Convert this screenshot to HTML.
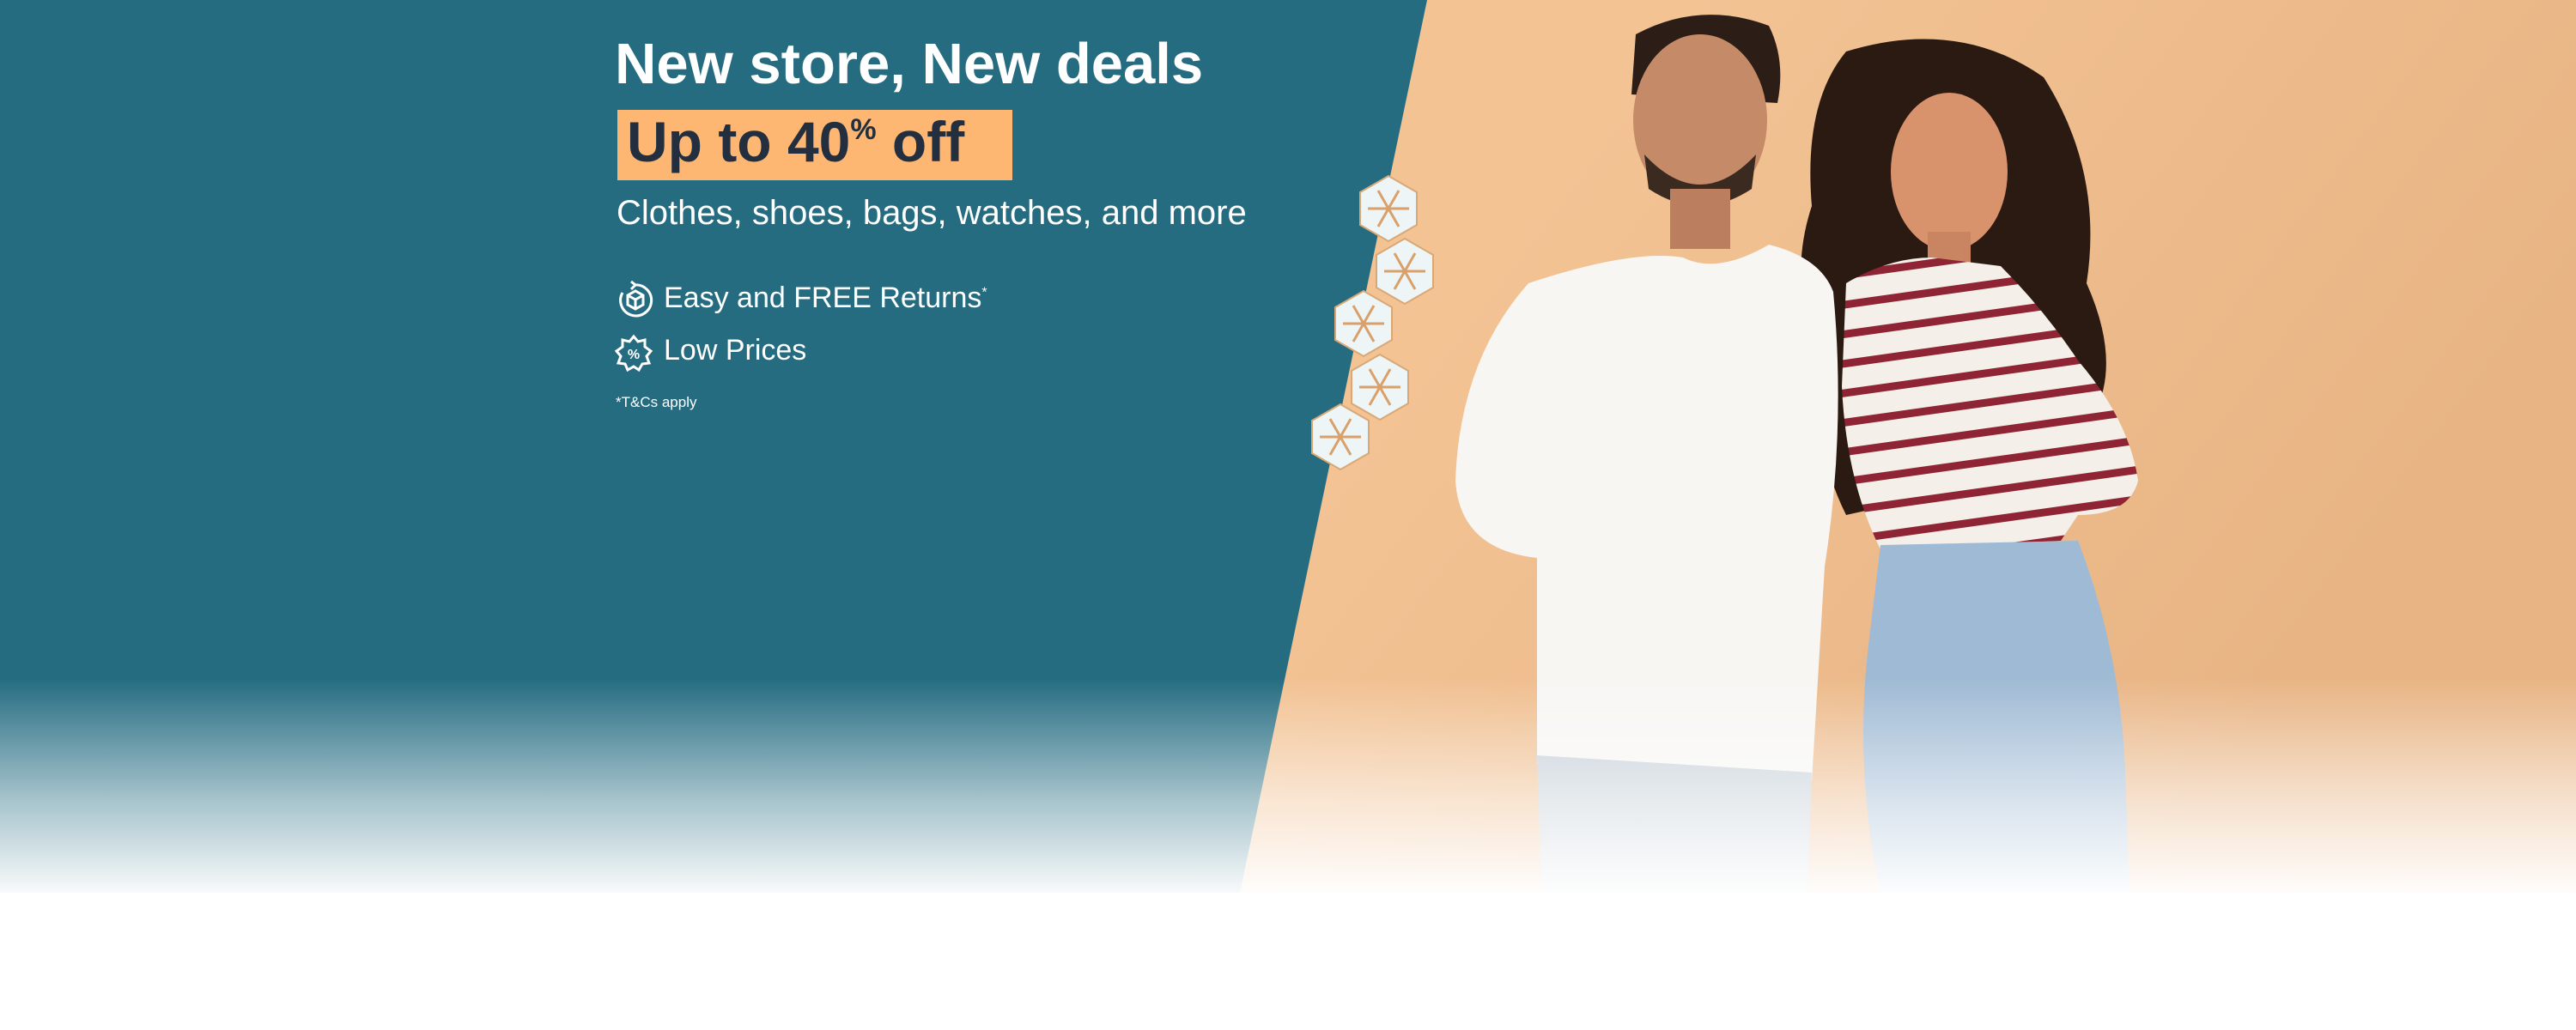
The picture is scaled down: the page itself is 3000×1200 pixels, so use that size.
<!DOCTYPE html>
<html><head><meta charset="utf-8"><style>
html,body{margin:0;padding:0;width:3000px;height:1200px;overflow:hidden;background:#fff}
.wrap{position:relative;width:3000px;height:1200px;font-family:"Liberation Sans",sans-serif}
svg.bg{position:absolute;left:0;top:0}
.t{position:absolute;color:#fff;white-space:nowrap}
</style></head><body><div class="wrap">
<svg class="bg" width="3000" height="1200" viewBox="0 0 3000 1200">
<defs>
<linearGradient id="pe" x1="0" y1="0" x2="1" y2="0.3"><stop offset="0" stop-color="#f1c395"/><stop offset="0.6" stop-color="#f3c394"/><stop offset="1" stop-color="#e8b484"/></linearGradient>
<linearGradient id="fade" x1="0" y1="0" x2="0" y2="1"><stop offset="0" stop-color="#fff" stop-opacity="0"/><stop offset="0.55" stop-color="#fff" stop-opacity="0.6"/><stop offset="1" stop-color="#fff" stop-opacity="1"/></linearGradient>
<pattern id="str" width="40" height="34" patternUnits="userSpaceOnUse" patternTransform="rotate(-8)"><rect width="40" height="34" fill="#f4efe9"/><rect y="0" width="40" height="9" fill="#8e2434"/></pattern>
<g id="hex"><polygon points="0,-38 33,-19 33,19 0,38 -33,19 -33,-19" fill="#eef5f6" stroke="#d9a877" stroke-width="2"/>
<g stroke="#d9a06a" stroke-width="3"><line x1="-24" y1="0" x2="24" y2="0"/><line x1="-12" y1="-21" x2="12" y2="21"/><line x1="12" y1="-21" x2="-12" y2="21"/></g></g>
</defs>
<rect width="3000" height="1200" fill="url(#pe)"/>
<polygon points="0,0 1662,0 1444,1040 0,1040" fill="#256c81"/>
<!-- woman hair -->
<path d="M2150,60 Q2280,20 2380,90 Q2450,200 2430,330 Q2470,420 2440,480 Q2380,500 2330,560 L2150,600 Q2110,520 2120,430 Q2080,330 2110,240 Q2100,120 2150,60Z" fill="#2a1a12"/>
<ellipse cx="2270" cy="200" rx="68" ry="92" fill="#d9936c"/>
<rect x="2245" y="270" width="50" height="50" fill="#c98462"/>
<!-- woman top -->
<path d="M2150,330 Q2200,300 2250,300 L2330,310 Q2380,360 2420,420 Q2480,490 2490,560 Q2480,600 2420,600 L2400,630 L2190,640 Q2150,560 2145,450Z" fill="url(#str)"/>
<!-- jeans -->
<path d="M2190,635 L2420,630 Q2470,760 2475,900 L2480,1040 L2190,1040 Q2160,900 2175,760Z" fill="#9fbad4"/>
<!-- man -->
<path d="M1905,40 Q1980,0 2060,30 Q2080,70 2070,120 L1900,110Z" fill="#2c1e16"/>
<ellipse cx="1980" cy="140" rx="78" ry="100" fill="#c58a68"/>
<path d="M1915,180 Q1980,250 2045,180 L2040,220 Q1980,260 1920,220Z" fill="#3a2a20"/>
<rect x="1945" y="220" width="70" height="70" fill="#bb7f5f"/>
<path d="M1780,330 Q1900,290 1960,300 Q2000,320 2060,285 Q2120,300 2135,340 Q2150,500 2125,660 L2110,910 L1790,890 L1790,650 Q1700,640 1695,560 Q1700,420 1780,330Z" fill="#f7f6f3"/>
<path d="M1790,880 L2110,900 L2105,1040 L1795,1040Z" fill="#c3cdd6"/>
<use href="#hex" x="1617" y="243"/>
<use href="#hex" x="1636" y="316"/>
<use href="#hex" x="1588" y="377"/>
<use href="#hex" x="1607" y="451"/>
<use href="#hex" x="1561" y="509"/>
<rect x="0" y="790" width="3000" height="260" fill="url(#fade)"/>
<rect x="0" y="1040" width="3000" height="160" fill="#fff"/>
<rect x="719" y="128" width="460" height="82" fill="#feb673"/>
</svg>
<div class="t" style="left:716px;top:36px;font-size:67px;font-weight:bold">New store, New deals</div>
<div class="t" style="left:730px;top:127px;font-size:66px;font-weight:bold;color:#232f3e">Up to 40<sup style="font-size:34px;vertical-align:26px">%</sup> off</div>
<div class="t" style="left:718px;top:226px;font-size:40px">Clothes, shoes, bags, watches, and more</div>
<svg class="t" style="left:717px;top:327px" width="46" height="46" viewBox="0 0 46 46" fill="none" stroke="#fff" stroke-width="3"><path d="M8,14 A18,18 0 1 0 22,5"/><path d="M18,1 L23,5 L18,10"/><path d="M14,17 L23,12 L32,17 L32,28 L23,33 L14,28Z M14,17 L23,22 L32,17 M23,22 L23,33"/></svg>
<div class="t" style="left:773px;top:328px;font-size:34px">Easy and FREE Returns<sup style="font-size:16px">*</sup></div>
<svg class="t" style="left:715px;top:389px" width="46" height="46" viewBox="0 0 46 46" fill="none" stroke="#fff" stroke-width="3"><path d="M23,3 L28,9 L36,7 L36,15 L43,20 L38,26 L41,34 L33,35 L29,42 L23,38 L16,42 L13,35 L5,34 L8,26 L3,20 L10,15 L10,7 L18,9Z"/><text x="23" y="29" font-size="16" font-weight="bold" fill="#fff" stroke="none" text-anchor="middle" font-family="Liberation Sans">%</text></svg>
<div class="t" style="left:773px;top:389px;font-size:34px">Low Prices</div>
<div class="t" style="left:717px;top:459px;font-size:17px">*T&amp;Cs apply</div>
</div></body></html>
